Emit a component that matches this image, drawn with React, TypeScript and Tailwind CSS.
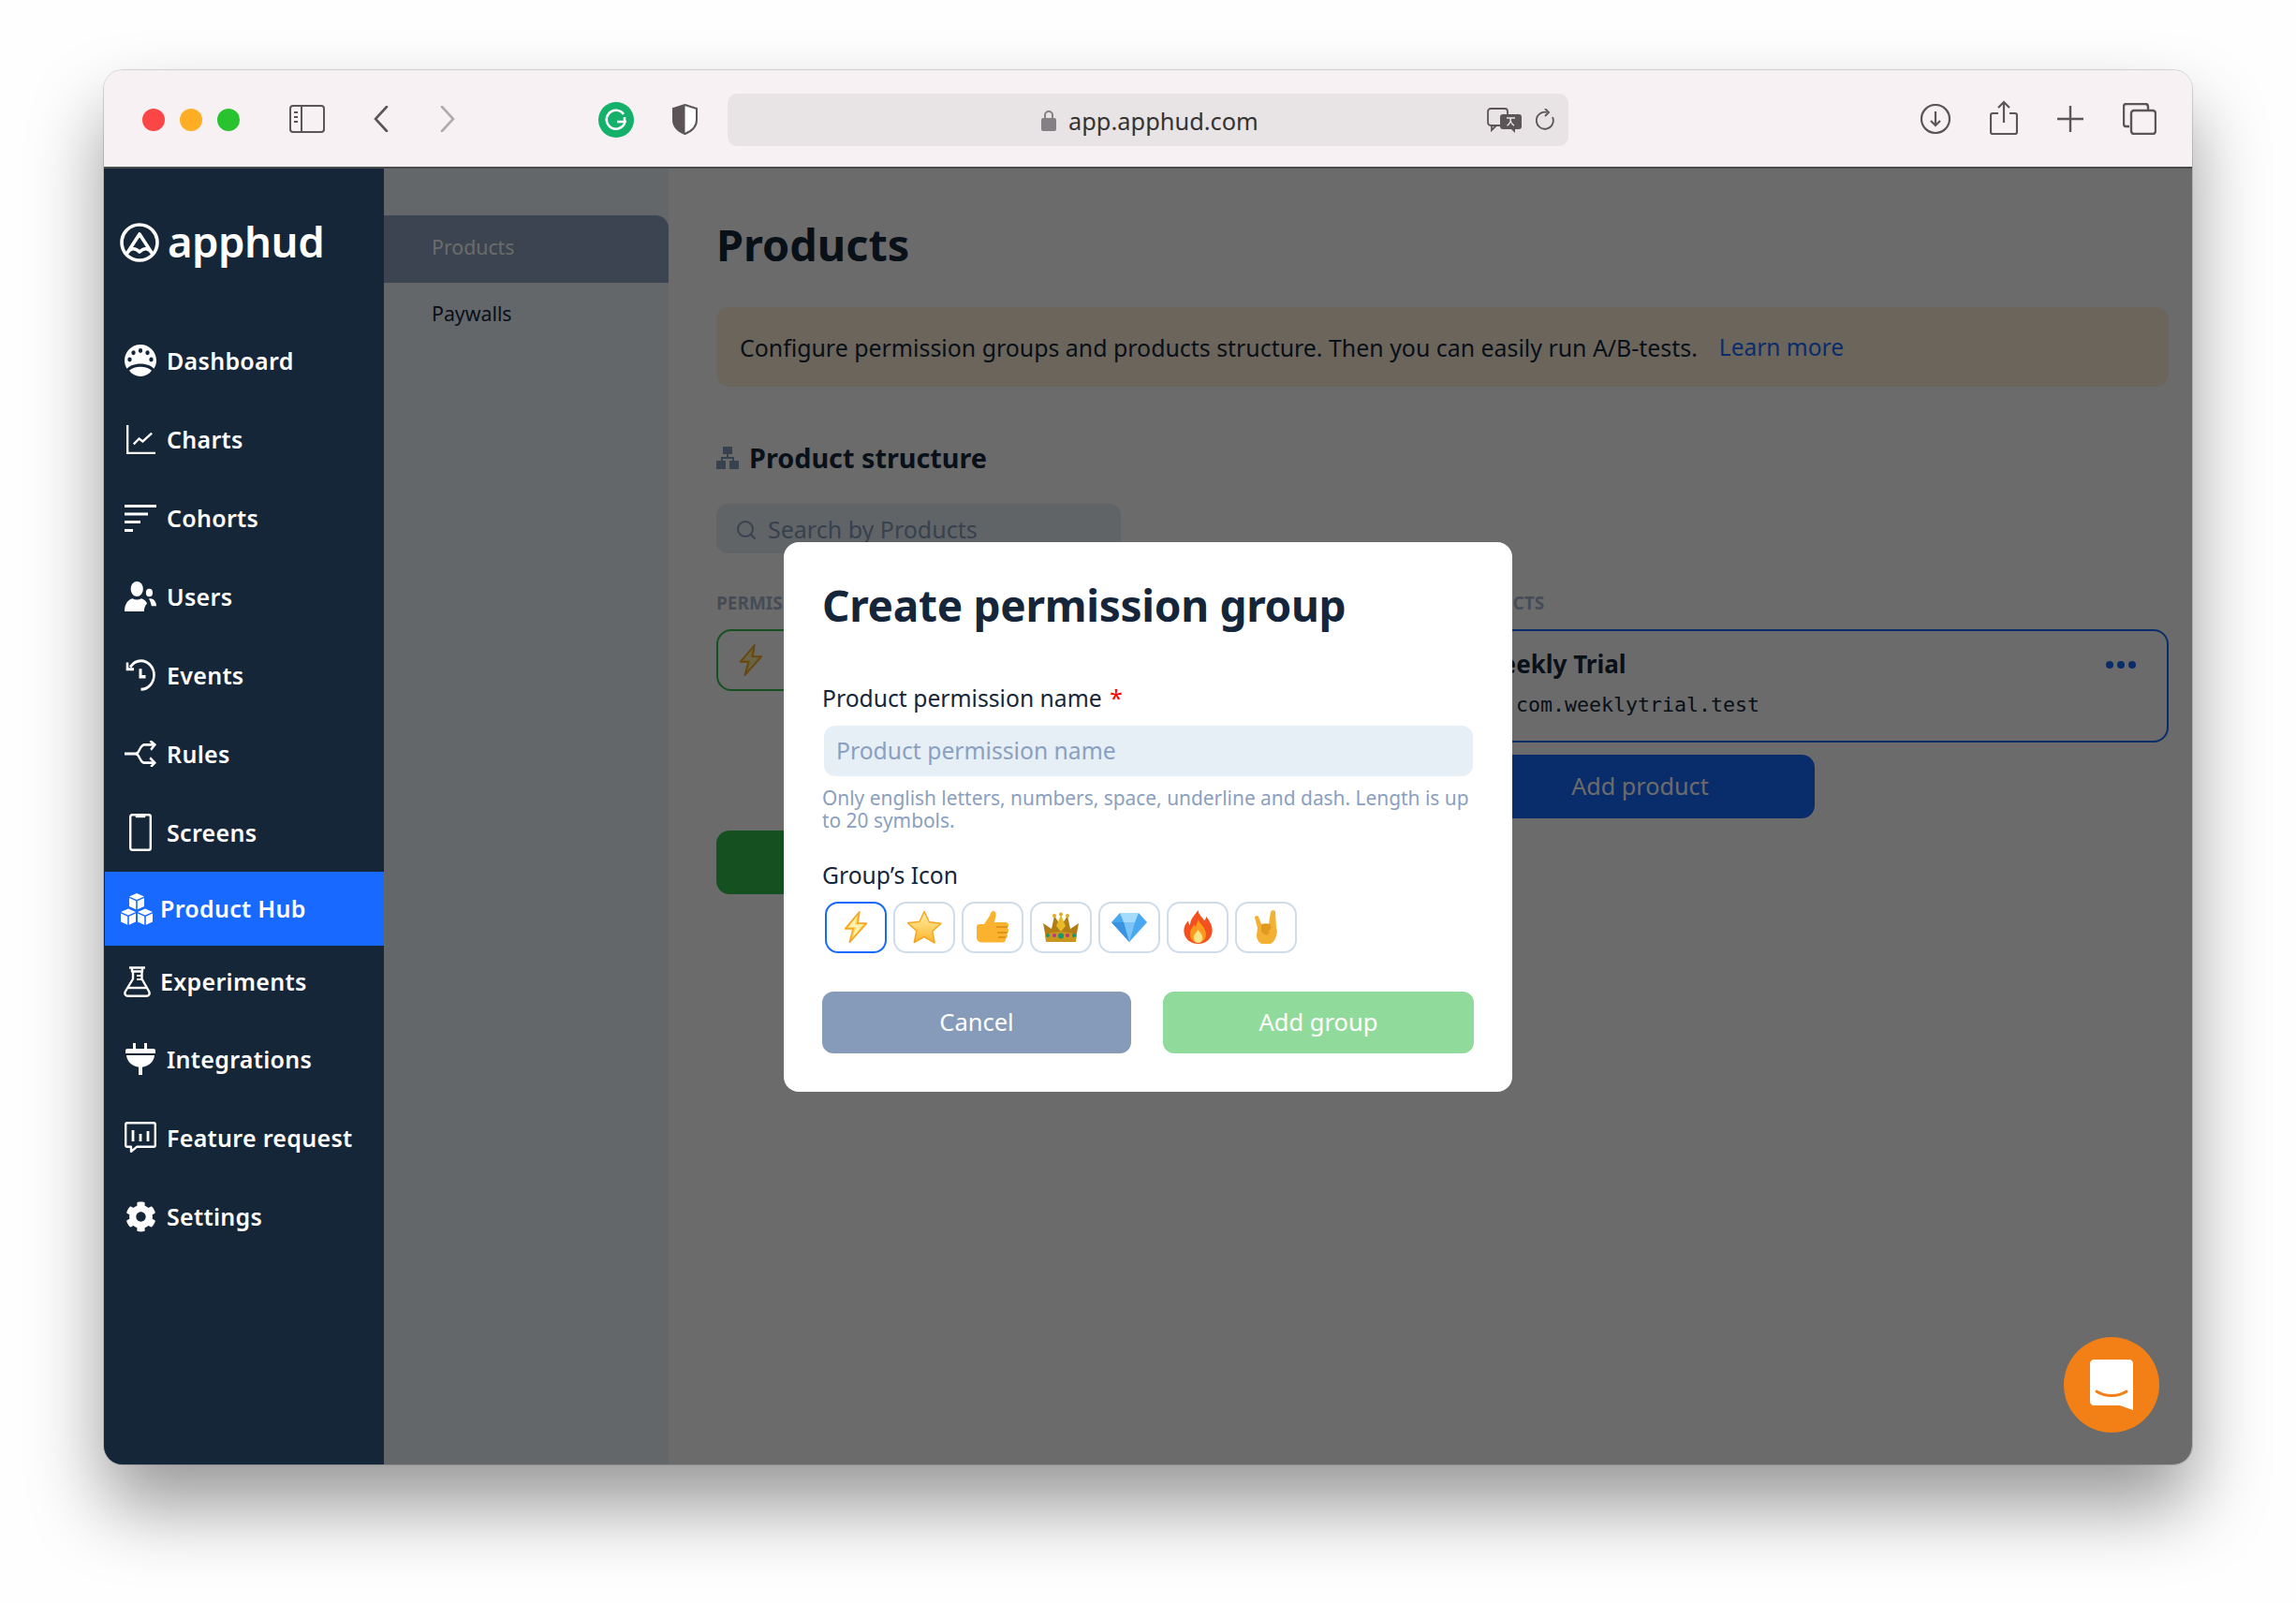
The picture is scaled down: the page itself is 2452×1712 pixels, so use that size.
import React from 'react';
import { Search } from 'lucide-react';
import { FaCog } from 'react-icons/fa';

// --- Sidebar icons ---

const DashboardIcon = () => (
  <svg width="34" height="34" viewBox="0 0 34 30" preserveAspectRatio="none" fill="white">
    <path fillRule="evenodd" d="M17 0C7.6 0 0 6.8 0 15c0 3 1 5.500 2.600 7.800C5 20 10.500 18 17 18s12 2 14.400 4.800C33 20.500 34 18 34 15 34 6.800 26.400 0 17 0zM17 3.500a2.200 2.200 0 1 1 0 4.400 2.200 2.200 0 0 1 0-4.400zM9.500 5.500a2.200 2.200 0 1 1 0 4.400 2.200 2.200 0 0 1 0-4.400zM24.500 5.500a2.200 2.200 0 1 1 0 4.400 2.200 2.200 0 0 1 0-4.400zM5.500 12a2.200 2.200 0 1 1 0 4.400 2.200 2.200 0 0 1 0-4.400zM28.500 12a2.200 2.200 0 1 1 0 4.400 2.200 2.200 0 0 1 0-4.400z" />
    <path d="M5 24.500C8 22 12 21 17 21s9 1 12 3.500C26 28 22 30 17 30S8 28 5 24.500z" />
  </svg>
);

const ChartsIcon = () => (
  <svg width="31" height="31" viewBox="0 0 32 32" fill="none" stroke="white" strokeWidth="2.400">
    <path d="M1.200 0v30.800H32" />
    <path d="M8 21l6-6 4 3 10-9" />
  </svg>
);

const CohortsIcon = () => (
  <svg width="34" height="29" viewBox="0 0 34 29" fill="white">
    <rect x="0" y="0" width="34" height="3" />
    <rect x="0" y="8.500" width="25" height="3" />
    <rect x="0" y="17" width="17" height="3" />
    <rect x="0" y="26" width="9" height="3" />
  </svg>
);

const UsersIcon = () => (
  <svg width="36" height="32" viewBox="0 0 36 28" preserveAspectRatio="none" fill="white">
    <circle cx="14" cy="7" r="7" />
    <path d="M0 28c0-7 4-11 9-12 3 1.500 7 1.500 10 0 3 .5 5 2 6.500 4.500C23.500 22 22 25 22 28z" />
    <circle cx="28" cy="10.500" r="3.800" />
    <path d="M36 23c0-4-3-7-7-7l-1.500.2c1.500 2 2.500 4.300 3 6.800z" />
  </svg>
);

const EventsIcon = () => (
  <svg width="32" height="34" viewBox="0 0 32 30" preserveAspectRatio="none" fill="none" stroke="white" strokeWidth="2.600">
    <path d="M5 7.500C8 3.500 12 1.500 16.500 1.500 24 1.500 30.500 7.500 30.500 15S24 28.500 16.500 28.500" />
    <path d="M2 3v6.500h7" />
    <path d="M16 9v7.500h5.500" strokeWidth="3" />
  </svg>
);

const RulesIcon = () => (
  <svg width="40" height="28" viewBox="0 0 40 26" preserveAspectRatio="none" fill="none" stroke="white" strokeWidth="2.600">
    <path d="M0 13h14c5 0 5-9 11-9h13" />
    <path d="M14 13c5 0 5 9 11 9h13" />
    <path d="M32 0l6 4-5 5M32 17l6 5-5 4" />
  </svg>
);

const ScreensIcon = () => (
  <svg width="24" height="40" viewBox="0 0 24 40" fill="none" stroke="white" strokeWidth="2.400">
    <rect x="1.200" y="1.200" width="21.600" height="37.600" rx="2" />
    <path d="M8 1.500h8v1.500H8z" fill="white" />
  </svg>
);

const cubePath = (x: number, y: number) =>
  `M${x + 8} ${y}l8 3.500-8 3.500-8-3.500z M${x} ${y + 5}l7.200 3.200v9L${x} ${y + 14}z M${x + 16} ${y + 5}l-7.200 3.200v9l7.200-3.200z`;

const CubesIcon = () => (
  <svg width="34" height="34" viewBox="0 0 34 34" fill="white">
    <path d={cubePath(9, 0)} />
    <path d={cubePath(0, 16.5)} />
    <path d={cubePath(18, 16.5)} />
  </svg>
);

const FlaskIcon = () => (
  <svg width="29" height="33" viewBox="0 0 29 33" fill="none" stroke="white" strokeWidth="2.400" strokeLinejoin="round">
    <path d="M6 1.500h17M9 1.500v4h11v-4" />
    <path d="M10 5.500v8L1.800 27c-1.200 2.500.3 4.800 3 4.800h19.400c2.700 0 4.200-2.300 3-4.800L19.500 13.500v-8" />
    <path d="M5 23h19" />
    <path d="M14 10h5M14 14h5" strokeWidth="1.800" />
  </svg>
);

const PlugIcon = () => (
  <svg width="32" height="34" viewBox="0 0 32 34" fill="white">
    <rect x="8" y="0" width="3" height="7" />
    <rect x="20" y="0" width="3" height="7" />
    <path d="M2 6h28c1 0 2 .8 2 2v3H0V8c0-1.200 1-2 2-2z" />
    <path d="M1 13h30c-.5 6-5 11-12 12.500H13C6 24 1.500 19 1 13z" />
    <rect x="14" y="25" width="4" height="9" />
  </svg>
);

const FeatureIcon = () => (
  <svg width="34" height="34" viewBox="0 0 34 34" fill="none" stroke="white" strokeWidth="2.400">
    <path d="M3 1.200h28c1 0 1.800 .8 1.800 1.800v22c0 1-.8 1.800-1.800 1.800H13l-6 5v-5H3c-1 0-1.800-.8-1.800-1.800V3c0-1 .8-1.800 1.800-1.800z" strokeLinejoin="round" />
    <path d="M9 9v12M17 13v8M25 10v11" strokeWidth="2.800" />
  </svg>
);

const StructureIcon = () => (
  <svg width="24" height="24" viewBox="0 0 24 24" fill="#869bba">
    <rect x="7" y="0" width="10" height="8" />
    <rect x="0" y="15" width="10" height="9" />
    <rect x="14" y="15" width="10" height="9" />
    <path d="M11 8h2v3h6v4h-2v-2H7v2H5v-4h6z" />
  </svg>
);

// --- Emoji, there is no colour emoji font so they are drawn ---

const BoltEmoji = () => (
  <svg width="26" height="34" viewBox="0 0 26 36">
    <path d="M17 1L1 20h9L6 35l19-21h-10z" fill="#ffd95c" stroke="#f5a623" strokeWidth="1.800" strokeLinejoin="round" />
    <path d="M14 6L5 18h8l-3 11 11-14h-9z" fill="#fdf0b0" />
  </svg>
);

const StarEmoji = () => (
  <svg width="38" height="36" viewBox="0 0 38 36">
    <defs>
      <linearGradient id="starFill" x1="0" y1="0" x2="0" y2="1">
        <stop offset="0" stopColor="#fff2a8" />
        <stop offset="1" stopColor="#fbb42c" />
      </linearGradient>
    </defs>
    <path d="M19 1.500l5.400 11.300 12.600 1.500-9.300 8.500 2.500 12.200L19 28.500 8.300 34.500l2.500-12.200L1.500 13.800l12.600-1.500z" fill="url(#starFill)" stroke="#f5a623" strokeWidth="1.500" strokeLinejoin="round" />
  </svg>
);

const ThumbEmoji = () => (
  <svg width="36" height="36" viewBox="0 0 36 36">
    <path d="M1 18c0-2 1.500-3 3-3h5l6-9c.8-2 1-4 3-5 3 0 4 2 3.500 5l-1.500 7h12c2 0 3 1.500 3 3s-.5 2.500-1.500 3c1 .5 1.500 1.500 1.500 3s-1 2.500-2 3c.5 .5 1 1.500 1 2.500s-1 2.500-2 3c.5 2-1 4-3 4H7c-3 0-6-2-6-5z" fill="#fbb22e" />
    <path d="M22 18h12M23 24h11M24 29h8" stroke="#d98a12" strokeWidth="1.600" fill="none" />
  </svg>
);

const CrownEmoji = () => (
  <svg width="38" height="32" viewBox="0 0 38 32">
    <path d="M3 28L0 12l9 6 3-14 7 11 7-11 3 14 9-6-3 16z" fill="#b17d16" />
    <path d="M19 3l5 12-5 6-5-6z" fill="#e8b928" />
    <circle cx="12" cy="4" r="2" fill="#e0ab22" />
    <circle cx="26" cy="4" r="2" fill="#e0ab22" />
    <circle cx="19" cy="2.500" r="2" fill="#e0ab22" />
    <path d="M2 24c11-4 23-4 34 0l-1 8H3z" fill="#c8951e" />
    <circle cx="5" cy="25" r="2" fill="#15996b" />
    <circle cx="12" cy="25" r="2" fill="#c2308a" />
    <circle cx="19" cy="25.500" r="3" fill="#15996b" />
    <circle cx="26" cy="25" r="2" fill="#c2308a" />
    <circle cx="33" cy="25" r="2" fill="#15996b" />
  </svg>
);

const GemEmoji = () => (
  <svg width="38" height="32" viewBox="0 0 38 32">
    <path d="M9 1h20l9 10-19 21L0 11z" fill="#4aa8f0" />
    <path d="M9 1h20l-4 10H13z" fill="#a5dcfb" />
    <path d="M13 11h12l-6 21z" fill="#7cc4f7" />
    <path d="M0 11h13l6 21z" fill="#3a93e2" />
  </svg>
);

const FireEmoji = () => (
  <svg width="31" height="36" viewBox="0 0 32 38">
    <path d="M16 0c1 6 5 8 7 12 1-1 2-3 2-5 4 5 7 10 7 16 0 9-7 15-16 15S0 32 0 23c0-4 2-8 5-11 0 2 .5 4 2 5C7 10 12 6 16 0z" fill="#f4501e" />
    <path d="M16 10c1 4 4 6 6 9 1 2 3 5 3 8 0 6-4 10-9 10s-9-4-9-10c0-5 3-8 5-11 0 1 .5 2 1.500 3 .5-3 2-6 2.500-9z" fill="#fb9a1f" />
    <path d="M16 22c1 3 5 5 5 9 0 3-2 6-5 6s-5-3-5-6c0-4 4-6 5-9z" fill="#fde68a" />
  </svg>
);

const HornsEmoji = () => (
  <svg width="26" height="36" viewBox="0 0 26 36">
    <path d="M1 8c0-2 3-3 4-1l3 8h8l2-13c.5-2.500 5-2.500 5 0l1 17c1 3 1 5 0 8-1 6-5 10-11 10-6 0-10-4-10-10l1-8z" fill="#f4b032" />
    <path d="M8 15c4-1 8-1 10 1 1 3 0 6-3 6 2 1 2 3 0 4-3 1-6-1-7-4z" fill="#e09a20" />
  </svg>
);

// --- Data ---

type NavItem = { label: string; icon: React.ReactNode };

const topNav: NavItem[] = [
  { label: 'Dashboard', icon: <DashboardIcon /> },
  { label: 'Charts', icon: <ChartsIcon /> },
  { label: 'Cohorts', icon: <CohortsIcon /> },
  { label: 'Users', icon: <UsersIcon /> },
  { label: 'Events', icon: <EventsIcon /> },
  { label: 'Rules', icon: <RulesIcon /> },
  { label: 'Screens', icon: <ScreensIcon /> },
];

const bottomNav: NavItem[] = [
  { label: 'Integrations', icon: <PlugIcon /> },
  { label: 'Feature request', icon: <FeatureIcon /> },
  { label: 'Settings', icon: <FaCog size={33} color="white" /> },
];

const emojis = [BoltEmoji, StarEmoji, ThumbEmoji, CrownEmoji, GemEmoji, FireEmoji, HornsEmoji];

const NavRow: React.FC<{ item: NavItem }> = ({ item }) => (
  <div className="flex items-center h-[84px] pl-[21px] gap-[11px]">
    <div className="w-[34px] flex justify-center shrink-0">{item.icon}</div>
    <span className="text-[25px] font-semibold text-white tracking-[0.3px] mt-[1px]">{item.label}</span>
  </div>
);

// --- Main App Component ---

const App: React.FC = () => {
  return (
    <div className="w-[2452px] h-[1712px] bg-[#fefefe] pt-[75px] pl-[111px] font-['Noto_Sans',sans-serif] overflow-hidden">
      <div className="w-[2230px] h-[1489px] rounded-[20px] shadow-[0_0_0_1px_rgba(0,0,0,0.14),0_45px_80px_rgba(0,0,0,0.4)] flex flex-col overflow-hidden">
        {/* Browser toolbar */}
        <header className="h-[105px] shrink-0 bg-[#f7f1f3] border-b-2 border-b-[#4a4a4a] flex items-start pt-[25px] relative">
          <div className="flex items-center gap-[16px] ml-[41px] mt-[16px]">
            <span className="w-[24px] h-[24px] rounded-full bg-[#fb4646]" />
            <span className="w-[24px] h-[24px] rounded-full bg-[#fdae24]" />
            <span className="w-[24px] h-[24px] rounded-full bg-[#28c32e]" />
          </div>
          <svg className="ml-[53px] mt-[12px]" width="38" height="30" viewBox="0 0 38 30" fill="none" stroke="#5c5557" strokeWidth="2">
            <rect x="1" y="1" width="36" height="28" rx="3" />
            <path d="M13 1v28" />
            <path d="M5 8h4M5 13h4M5 18h4" strokeWidth="2" />
          </svg>
          <svg className="ml-[52px] mt-[13px]" width="16" height="28" viewBox="0 0 16 28" fill="none" stroke="#5c5557" strokeWidth="2.600" strokeLinecap="round">
            <path d="M14 1L2 14l12 13" />
          </svg>
          <svg className="ml-[55px] mt-[13px]" width="16" height="28" viewBox="0 0 16 28" fill="none" stroke="#b0abad" strokeWidth="2.600" strokeLinecap="round">
            <path d="M2 1l12 13L2 27" />
          </svg>
          <div className="ml-[153px] mt-[9px] w-[38px] h-[38px] rounded-full bg-[#15b06a] flex items-center justify-center">
            <svg width="24" height="24" viewBox="0 0 24 24" fill="none" stroke="white" strokeWidth="2.600">
              <path d="M20 6a10 10 0 1 0 1.500 8H13" />
              <path d="M21 9v6" />
            </svg>
          </div>
          <svg className="ml-[41px] mt-[11px]" width="27" height="33" viewBox="0 0 27 33">
            <path d="M13.500 1L26 5v12c0 7-5 12-12.500 15C6 29 1 24 1 17V5z" fill="#fff" stroke="#5c5557" strokeWidth="2" />
            <path d="M13.500 1L1 5v12c0 7 5 12 12.500 15z" fill="#5c5557" />
          </svg>
          <div className="ml-[32px] w-[898px] h-[56px] rounded-[10px] bg-[#e8e3e5] flex items-center relative">
            <svg className="ml-[335px]" width="16" height="23" viewBox="0 0 16 23" fill="none">
              <path d="M4 10V6a4 4 0 0 1 8 0v4" stroke="#858085" strokeWidth="2" />
              <rect x="0" y="9" width="16" height="14" rx="2" fill="#858085" />
            </svg>
            <span className="ml-[13px] text-[25.400px] text-[#333] leading-none mt-[3px]">app.apphud.com</span>
            <svg className="absolute left-[811px] top-[15px]" width="37" height="27" viewBox="0 0 37 27">
              <rect x="1" y="1" width="21" height="18" rx="3" fill="none" stroke="#5c5557" strokeWidth="1.800" />
              <path d="M5 19v5l5-5" fill="none" stroke="#5c5557" strokeWidth="1.800" />
              <rect x="14" y="7" width="23" height="16" rx="3" fill="#5c5557" />
              <path d="M30 22v5l-5-5z" fill="#5c5557" />
              <path d="M21 11h9M25.500 11c0 4-2 7-4 8M25 11c0 4 2 7 4 8" stroke="#e8e3e5" strokeWidth="1.400" fill="none" />
            </svg>
            <svg className="absolute left-[863px] top-[16px]" width="21" height="25" viewBox="0 0 21 25" fill="none" stroke="#5c5557" strokeWidth="1.800">
              <path d="M18 9a9 9 0 1 1-6-5" />
              <path d="M10 0l4 4-4 4" />
            </svg>
          </div>
          <svg className="ml-[375px] mt-[11px]" width="34" height="32" viewBox="0 0 34 32" fill="none" stroke="#5c5557" strokeWidth="2.200">
            <circle cx="17" cy="16" r="15" />
            <path d="M17 8v15M12 18l5 5 5-5" />
          </svg>
          <svg className="ml-[41px] mt-[7px]" width="30" height="37" viewBox="0 0 30 37" fill="none" stroke="#5c5557" strokeWidth="2.200">
            <path d="M9 14H3c-1 0-2 1-2 2v18c0 1 1 2 2 2h24c1 0 2-1 2-2V16c0-1-1-2-2-2h-6" />
            <path d="M15 24V2M9 8l6-6 6 6" />
          </svg>
          <svg className="ml-[42px] mt-[13px]" width="28" height="28" viewBox="0 0 28 28" fill="none" stroke="#5c5557" strokeWidth="2.400">
            <path d="M14 0v28M0 14h28" />
          </svg>
          <svg className="ml-[42px] mt-[10px]" width="36" height="34" viewBox="0 0 36 34" fill="none" stroke="#5c5557" strokeWidth="2.400">
            <path d="M7 25H4c-2 0-3-1-3-3V4c0-2 1-3 3-3h20c2 0 3 1 3 3v3" />
            <rect x="9" y="8" width="26" height="25" rx="3" />
          </svg>
        </header>

        <div className="flex-1 flex relative min-h-0">
          {/* Sidebar */}
          <aside className="w-[299px] shrink-0 bg-[#162639] relative z-20 pl-[1px]">
            <div className="h-[163px] flex items-start pl-[16px] pt-[58px] gap-[9px]">
              <svg width="42" height="42" viewBox="0 0 42 42" fill="none" stroke="white" strokeWidth="3.600">
                <circle cx="21" cy="21" r="19" />
                <path d="M8 32L21 12l13 20c-3-5-8-6-13-1-5-5-10-4-13 1z" strokeLinejoin="round" />
              </svg>
              <span className="text-[45.500px] font-semibold text-white leading-[38px] tracking-[-0.5px]">apphud</span>
            </div>
            {topNav.map(item => <NavRow key={item.label} item={item} />)}
            <div className="h-[79px] bg-[#1769ff] flex items-center pl-[17px] gap-[8px]">
              <CubesIcon />
              <span className="text-[25px] font-semibold text-white tracking-[0.3px]">Product Hub</span>
            </div>
            <div className="h-[79px] flex items-center pl-[17px] pb-[2px] gap-[8px]">
              <div className="w-[34px] flex justify-center"><FlaskIcon /></div>
              <span className="text-[25px] font-semibold text-white tracking-[0.3px]">Experiments</span>
            </div>
            {bottomNav.map(item => <NavRow key={item.label} item={item} />)}
          </aside>

          {/* Sub navigation */}
          <nav className="w-[304px] shrink-0 bg-[#ecf5fc] pt-[50px]">
            <div className="h-[72px] bg-[#8ca2be] rounded-tr-[14px] flex items-center pl-[51px] pb-[5px] text-[21.300px] text-white">Products</div>
            <div className="h-[72px] flex items-center pl-[51px] pb-[7px] text-[21.300px] text-[#15263b]">Paywalls</div>
          </nav>

          {/* Page content */}
          <main className="flex-1 bg-white pl-[51px] pr-[25px] pt-[57px] min-w-0">
            <h1 className="text-[46.800px] font-bold text-[#15263b] leading-[48px] h-[91px]">Products</h1>
            <div className="h-[85px] rounded-[14px] bg-[#fff1db] flex items-center pl-[25px] pt-[2px] text-[24.900px] text-[#15263b]">
              Configure permission groups and products structure. Then you can easily run A/B-tests.
              <span className="ml-[23px] text-[24.500px] text-[#1769ff]">Learn more</span>
            </div>
            <div className="flex items-center gap-[11px] mt-[60px] h-[32px]">
              <StructureIcon />
              <span className="text-[28.800px] font-bold text-[#15263b]">Product structure</span>
            </div>
            <div className="w-[432px] h-[53px] rounded-[12px] bg-[#e6eef6] mt-[33px] flex items-center pl-[20px] pt-[2px] gap-[11px]">
              <Search size={24} color="#869bba" />
              <span className="text-[25px] text-[#869bba]">Search by Products</span>
            </div>
            <div className="flex mt-[41px]">
              <div className="w-[786px] shrink-0">
                <div className="text-[19px] font-bold text-[#a5b5cc] h-[40px] leading-[24px]">PERMIS</div>
                <div className="w-[740px] h-[66px] rounded-[16px] border-2 border-[#32be4c] flex items-center pl-[22px]">
                  <BoltEmoji />
                </div>
                <div className="w-[740px] h-[68px] rounded-[14px] bg-[#32be4c] mt-[149px]" />
              </div>
              <div className="flex-1">
                <div className="-ml-[3px] text-[19px] font-bold text-[#a5b5cc] h-[40px] leading-[24px]">PRODUCTS</div>
                <div className="h-[121px] rounded-[16px] border-2 border-[#1769ff] flex justify-between pl-[26px] pr-[33px] pt-[18px]">
                  <div>
                    <div className="text-[26px] font-bold text-[#15263b] leading-[34px]">Weekly Trial</div>
                    <div className="text-[21.600px] text-[#15263b] leading-[30px] mt-[12px] ml-[40px] font-['DejaVu_Sans_Mono',monospace]">com.weeklytrial.test</div>
                  </div>
                  <div className="flex gap-[4px] mt-[14px]">
                    <span className="w-[8px] h-[8px] rounded-full bg-[#1769ff]" />
                    <span className="w-[8px] h-[8px] rounded-full bg-[#1769ff]" />
                    <span className="w-[8px] h-[8px] rounded-full bg-[#1769ff]" />
                  </div>
                </div>
                <div className="ml-[14px] mt-[13px] w-[373px] h-[68px] rounded-[14px] bg-[#1769ff] flex items-center justify-center text-[25.200px] text-white">Add product</div>
              </div>
            </div>
          </main>

          {/* Modal overlay */}
          <div className="absolute inset-0 z-10 bg-black/58 flex items-center justify-center">
            <div className="w-[778px] h-[587px] bg-white rounded-[16px] pl-[41px] pr-[41px] pt-[35px]">
              <h2 className="text-[46px] font-bold text-[#15263b] leading-[64px] tracking-[-0.3px]">Create permission group</h2>
              <div className="text-[24.700px] text-[#15263b] mt-[51px] leading-[34px]">
                Product permission name <span className="text-[#ff0000] ml-[2px]">*</span>
              </div>
              <div className="ml-[2px] mt-[12px] w-[693px] h-[54px] rounded-[12px] bg-[#e6eef6] flex items-center pl-[13px] text-[24.700px] text-[#8aa0c0]">
                Product permission name
              </div>
              <p className="text-[20.900px] text-[#8aa0c0] leading-[24px] mt-[11px]">
                Only english letters, numbers, space, underline and dash. Length is up to 20 symbols.
              </p>
              <div className="text-[24.700px] text-[#15263b] mt-[30px] leading-[34px]">Group’s Icon</div>
              <div className="flex gap-[7px] ml-[3px] mt-[11px]">
                {emojis.map((Emoji, i) => (
                  <div key={i} className={`w-[66px] h-[55px] rounded-[14px] border-2 flex items-center justify-center ${i === 0 ? 'border-[#1769ff]' : 'border-[#cfdcea]'}`}>
                    <Emoji />
                  </div>
                ))}
              </div>
              <div className="flex gap-[34px] mt-[41px]">
                <div className="w-[331px] h-[66px] rounded-[12px] bg-[#869bba] flex items-center justify-center text-[25.500px] text-white">Cancel</div>
                <div className="w-[333px] h-[66px] rounded-[12px] bg-[#90db9b] flex items-center justify-center text-[25.500px] text-white">Add group</div>
              </div>
            </div>
          </div>

          {/* Chat launcher */}
          <div className="absolute z-30 left-[2093px] top-[1248px] w-[102px] h-[102px] rounded-full bg-[#f38016] flex items-center justify-center">
            <svg width="46" height="54" viewBox="0 0 46 54">
              <path d="M4 0h38c2 0 4 2 4 4v50l-14-5H4c-2 0-4-2-4-4V4C0 2 2 0 4 0z" fill="white" />
              <path d="M7 34c9 6 23 6 32 0" fill="none" stroke="#f38016" strokeWidth="3" strokeLinecap="round" />
            </svg>
          </div>
        </div>
      </div>
    </div>
  );
};

export default App;
